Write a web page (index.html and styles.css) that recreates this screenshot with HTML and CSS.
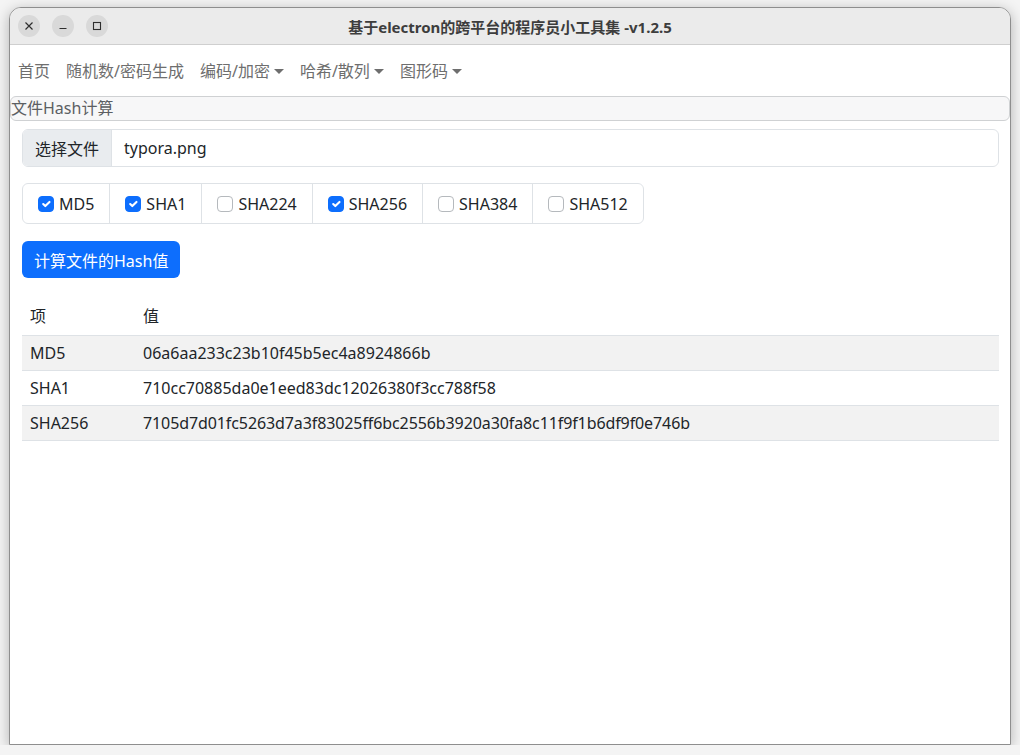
FILE: index.html
```html
<!DOCTYPE html>
<html lang="zh">
<head>
    <meta charset="UTF-8">
    <title>基于electron的跨平台的程序员小工具集 -v1.2.5</title>
    <link rel="stylesheet" href="styles.css">
</head>
<body>

    <div class="window">
        <div class="titlebar">
            <div class="win-buttons">
                <span class="win-btn">
                    <svg width="10" height="10" viewBox="0 0 10 10"><path d="M1.5 1.5 L8.5 8.5 M8.5 1.5 L1.5 8.5" stroke="#2e2e2e" stroke-width="1.2"/></svg>
                </span>
                <span class="win-btn">
                    <svg width="10" height="10" viewBox="0 0 10 10"><path d="M1.5 7.5 H8.5" stroke="#2e2e2e" stroke-width="1.2"/></svg>
                </span>
                <span class="win-btn">
                    <svg width="10" height="10" viewBox="0 0 10 10"><rect x="1.5" y="1.5" width="7" height="7" fill="none" stroke="#2e2e2e" stroke-width="1.1"/></svg>
                </span>
            </div>
            <div class="title">基于electron的跨平台的程序员小工具集 -v1.2.5</div>
        </div>

        <div class="content">
            <!-- menu -->
            <nav class="navbar">
                <a class="nav-link">首页</a>
                <a class="nav-link">随机数/密码生成</a>
                <a class="nav-link dropdown">编码/加密</a>
                <a class="nav-link dropdown">哈希/散列</a>
                <a class="nav-link dropdown">图形码</a>
            </nav>

            <div class="card-header">文件Hash计算</div>

            <div class="card-body">
                <div class="input-group">
                    <span class="input-label">选择文件</span>
                    <span class="file-name">typora.png</span>
                </div>

                <div class="check-group">
                    <label class="check-item"><span class="check on"></span>MD5</label>
                    <label class="check-item"><span class="check on"></span>SHA1</label>
                    <label class="check-item"><span class="check"></span>SHA224</label>
                    <label class="check-item"><span class="check on"></span>SHA256</label>
                    <label class="check-item"><span class="check"></span>SHA384</label>
                    <label class="check-item"><span class="check"></span>SHA512</label>
                </div>

                <button class="btn-primary">计算文件的Hash值</button>

                <table class="hash-table">
                    <thead>
                        <tr><th class="col-name">项</th><th>值</th></tr>
                    </thead>
                    <tbody>
                        <tr><td>MD5</td><td>06a6aa233c23b10f45b5ec4a8924866b</td></tr>
                        <tr><td>SHA1</td><td>710cc70885da0e1eed83dc12026380f3cc788f58</td></tr>
                        <tr><td>SHA256</td><td class="hash">7105d7d01fc5263d7a3f83025ff6bc2556b3920a30fa8c11f9f1b6df9f0e746b</td></tr>
                    </tbody>
                </table>
            </div>
        </div>
    </div>

</body>
</html>
```

FILE: styles.css
```css
body {
    margin: 0;
    padding: 0;
    background-color: #f4f4f4;
    font-family: "Noto Sans", "Noto Sans CJK SC", sans-serif;
    color: #212529;
    font-size: 16px;
}
.window {
    margin: 7px 0 0 9px;
    width: 1000px;
    height: 736px;
    border: 1px solid #8e8e8e;
    border-radius: 12px 12px 0 0;
    background-color: #fff;
    box-shadow: 0 3px 14px rgba(0, 0, 0, 0.28);
    overflow: hidden;
}
.titlebar {
    height: 36px;
    background-color: #ebebeb;
    border-bottom: 1px solid #cfcfcf;
    display: flex;
    align-items: center;
    position: relative;
}
.win-buttons {
    display: flex;
    gap: 12px;
    padding-left: 8px;
}
.win-btn {
    width: 22px;
    height: 22px;
    border-radius: 50%;
    background-color: #d9d9d9;
    display: flex;
    align-items: center;
    justify-content: center;
}
.title {
    position: absolute;
    left: 0;
    right: 0;
    text-align: center;
    font-size: 15px;
    font-weight: bold;
    color: #3d3d3d;
    pointer-events: none;
}
.navbar {
    height: 51px;
    display: flex;
    align-items: center;
}
.nav-link {
    padding: 0 8px;
    color: #6e6e6e;
    line-height: 24px;
}
.dropdown::after {
    content: "";
    display: inline-block;
    margin-left: 4px;
    vertical-align: 3px;
    border-top: 5px solid #6e6e6e;
    border-left: 5px solid transparent;
    border-right: 5px solid transparent;
}
.card-header {
    border: 1px solid #cfd1d3;
    border-radius: 6px;
    background-color: #f7f7f8;
    color: #5c5f63;
    line-height: 23px;
    padding: 0;
}
.card-body {
    padding: 8px 11px 0 12px;
}
.input-group {
    display: flex;
    height: 36px;
    border: 1px solid #dee2e6;
    border-radius: 6px;
    overflow: hidden;
}
.input-label {
    padding: 0 12px;
    background-color: #e9ecef;
    border-right: 1px solid #dee2e6;
    display: flex;
    align-items: center;
}
.file-name {
    padding: 0 12px;
    display: flex;
    align-items: center;
}
.check-group {
    margin-top: 16px;
    display: inline-flex;
    height: 39px;
    border: 1px solid #dee2e6;
    border-radius: 6px;
}
.check-item {
    display: flex;
    align-items: center;
    padding: 0 15px;
    border-left: 1px solid #dee2e6;
}
.check-item:first-child {
    border-left: none;
}
.check {
    width: 14px;
    height: 14px;
    border: 1px solid #b5b9bd;
    border-radius: 4px;
    margin-right: 5px;
    background-color: #fff;
}
.check.on {
    background-color: #0d6efd;
    border-color: #0d6efd;
    background-image: url("data:image/svg+xml,%3csvg xmlns='http://www.w3.org/2000/svg' viewBox='0 0 20 20'%3e%3cpath fill='none' stroke='%23fff' stroke-linecap='round' stroke-linejoin='round' stroke-width='3' d='m6 10 3 3 6-6'/%3e%3c/svg%3e");
    background-size: 100% 100%;
}
.btn-primary {
    display: block;
    margin-top: 17px;
    height: 37px;
    padding: 0 12px;
    background-color: #0d6efd;
    color: #fff;
    border: none;
    border-radius: 6px;
    font-family: inherit;
    font-size: 16px;
}
.hash-table {
    margin-top: 21px;
    width: 100%;
    border-collapse: collapse;
}
.hash-table th, .hash-table td {
    text-align: left;
    font-weight: normal;
    padding: 5px 8px;
    line-height: 24px;
    border-bottom: 1px solid #dee2e6;
}
.hash-table th {
    padding-bottom: 7px;
}
.col-name {
    width: 97px;
}
.hash-table .hash {
    letter-spacing: -0.1px;
}
.hash-table tbody tr:nth-child(odd) {
    background-color: #f2f2f2;
}
```
